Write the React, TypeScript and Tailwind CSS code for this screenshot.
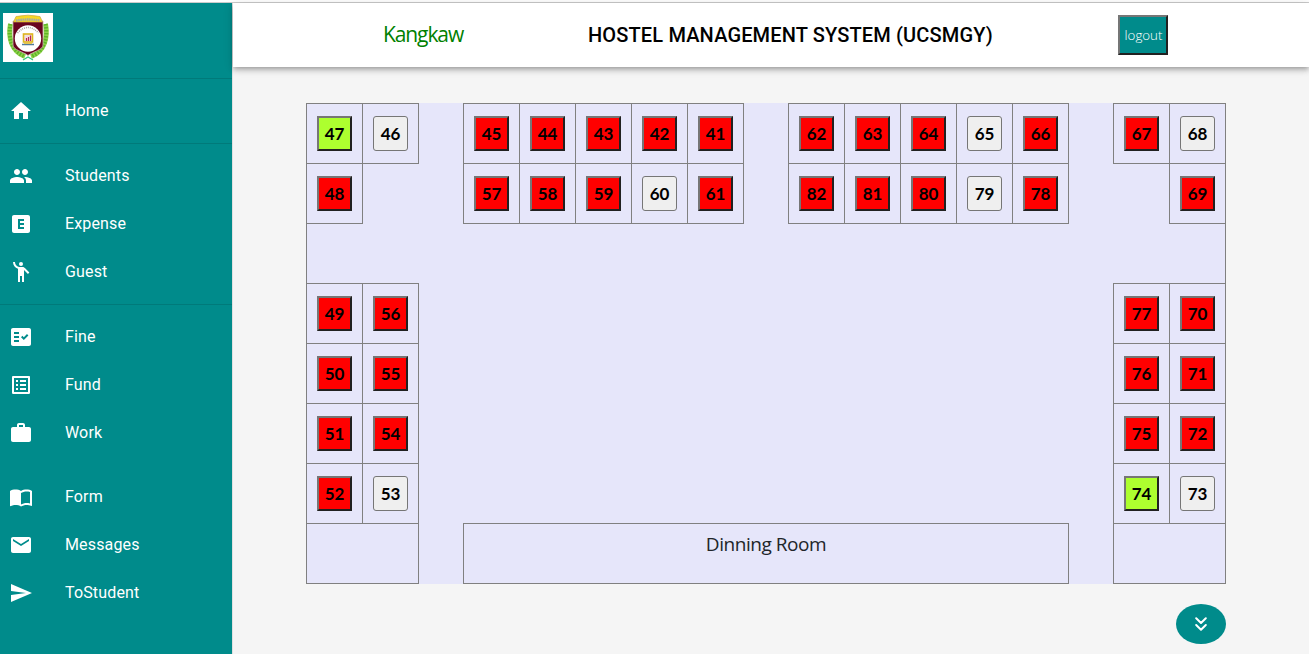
import React from "react";
import {
  MdHome, MdPeople, MdExplicit, MdEmojiPeople, MdFactCheck, MdListAlt,
  MdWork, MdImportContacts, MdEmail, MdSend,
} from "react-icons/md";
import type { IconType } from "react-icons";

type Item = { label: string; Icon: IconType };

const groups: { items: Item[]; divider: boolean }[] = [
  { items: [{ label: "Home", Icon: MdHome }], divider: true },
  {
    items: [
      { label: "Students", Icon: MdPeople },
      { label: "Expense", Icon: MdExplicit },
      { label: "Guest", Icon: MdEmojiPeople },
    ],
    divider: true,
  },
  {
    items: [
      { label: "Fine", Icon: MdFactCheck },
      { label: "Fund", Icon: MdListAlt },
      { label: "Work", Icon: MdWork },
    ],
    divider: false,
  },
  {
    items: [
      { label: "Form", Icon: MdImportContacts },
      { label: "Messages", Icon: MdEmail },
      { label: "ToStudent", Icon: MdSend },
    ],
    divider: false,
  },
];

const FREE = new Set([46, 60, 65, 79, 68, 53, 73]);
const PARTIAL = new Set([47, 74]);

function Room({ n }: { n: number }) {
  const base = "block mx-auto w-[35px] h-[35px] p-0 text-center font-['Lato',sans-serif] text-[17px] font-bold text-black ";
  if (FREE.has(n)) {
    return <button className={base + "rounded-[3px] border border-[#767676] bg-[#efefef]"}>{n}</button>;
  }
  const fill = PARTIAL.has(n) ? "bg-[#adff2f]" : "bg-[#ff0000]";
  return (
    <button className={base + fill + " border-2 border-t-[#767676] border-l-[#767676] border-r-[#212121] border-b-[#212121]"}>
      {n}
    </button>
  );
}

function Cells({ rooms }: { rooms: number[] }) {
  return (
    <>
      {rooms.map((n) => (
        <td key={n} className="border border-[#808080] p-0 align-middle"><Room n={n} /></td>
      ))}
    </>
  );
}

const columns = [56, 56, 45, 56, 56, 56, 56, 56, 45, 56, 56, 56, 56, 56, 45, 56, 56];
const sideRows = [
  [49, 56, 77, 70],
  [50, 55, 76, 71],
  [51, 54, 75, 72],
  [52, 53, 74, 73],
];

function Crest() {
  return (
    <svg viewBox="0 0 50 49" className="block h-[49px] w-[50px]">
      <rect width="50" height="49" fill="#fff" />
      <path d="M7.500 11C5 24 8 38 22 43.500M42.500 11C45 24 42 38 28 43.500" fill="none" stroke="#8fd24a" strokeWidth="5" />
      <path d="M7.500 11C5 24 8 38 22 43.500M42.500 11C45 24 42 38 28 43.500" fill="none" stroke="#5fb52a" strokeWidth="4" strokeDasharray="1.500 1.500" />
      <path d="M20 47L25 44L30 47" fill="none" stroke="#36c779" strokeWidth="1.2" />
      <path d="M10 8H40V32C40 37 30 38.500 25 42.500C20 38.500 10 37 10 32Z" fill="#69041f" stroke="#c9b3ad" strokeWidth=".8" />
      <path d="M10.500 9L13 3.500Q25 .8 37 3.500L39.500 9Z" fill="#f8d824" stroke="#c3a64d" strokeWidth=".7" />
      <path d="M13 7.500Q25 5.500 37 7.500" fill="none" stroke="#9fa7b2" strokeWidth="2.300" strokeDasharray="1.500 .7" />
      <circle cx="25" cy="25.500" r="13.200" fill="#fff" />
      <path d="M14.500 20Q25 9 35.500 20" fill="none" stroke="#aaa0a0" strokeWidth="1.500" strokeDasharray="1 1" />
      <rect x="20.500" y="21" width="9" height="8" fill="#f4dde0" stroke="#ddb51e" strokeWidth="1.600" />
      <path d="M23.500 28V25M25.500 28V24M27.500 28V22.500" stroke="#b72454" strokeWidth="1.200" />
      <path d="M19 31.500H31" stroke="#527b98" strokeWidth="1.500" />
      <path d="M21 30.300H29" stroke="#e6bd2d" />
    </svg>
  );
}

export default function App() {
  return (
    <div className="flex h-[654px] w-[1309px] flex-col overflow-hidden bg-white font-['Roboto',sans-serif]">
      <div className="h-[3px] shrink-0 border-b border-[#cccccc]" />
      <div className="flex min-h-0 flex-1">
        <aside className="w-[233px] shrink-0 border-r border-[#e0e0e0] bg-[#008b8b]">
          <div className="h-[76px] border-b border-[#007a7a] pt-[10px] pl-[3px]"><Crest /></div>
          <nav>
            {groups.map((g) => (
              <ul key={g.items[0].label} className={g.divider ? "border-b border-[#007a7a] py-2" : "py-2"}>
                {g.items.map(({ label, Icon }) => (
                  <li key={label} className="flex h-12 items-center pl-[9px] text-white">
                    <Icon className="h-6 w-6" />
                    <span className="ml-8 text-base leading-6 tracking-[0.15px]">{label}</span>
                  </li>
                ))}
              </ul>
            ))}
          </nav>
        </aside>
        <div className="flex flex-1 flex-col bg-[#f5f5f5]">
          <header className="flex h-16 shrink-0 items-center bg-white shadow-[0px_2px_4px_-1px_rgba(0,0,0,0.2),0px_4px_5px_0px_rgba(0,0,0,0.14),0px_1px_10px_0px_rgba(0,0,0,0.12)]">
            <span className="ml-[150px] w-[205px] pb-[2px] font-['Open_Sans',sans-serif] text-[21px] leading-[30px] tracking-[-1.1px] text-[#008000]">Kangkaw</span>
            <h1 className="w-[530px] whitespace-nowrap text-[20px] font-medium leading-8 tracking-[0.15px] text-black">
              HOSTEL MANAGEMENT SYSTEM (UCSMGY)
            </h1>
            <button className="h-10 w-[50px] whitespace-nowrap border-2 border-t-[#767676] border-l-[#767676] border-r-[#212121] border-b-[#212121] bg-[#008b8b] p-0 pt-[2px] pl-px font-['Open_Sans',sans-serif] text-[13.333px] font-light text-white">
              logout
            </button>
          </header>
          <main className="pt-9 pl-[73px]">
            <table className="w-[920px] table-fixed border-collapse bg-[#e6e6fa]">
              <colgroup>
                {columns.map((w, i) => (
                  <col key={i} className={w === 56 ? "w-[56px]" : "w-[45px]"} />
                ))}
              </colgroup>
              <tbody>
                <tr className="h-[60px]">
                  <Cells rooms={[47, 46]} />
                  <td />
                  <Cells rooms={[45, 44, 43, 42, 41]} />
                  <td />
                  <Cells rooms={[62, 63, 64, 65, 66]} />
                  <td />
                  <Cells rooms={[67, 68]} />
                </tr>
                <tr className="h-[60px]">
                  <Cells rooms={[48]} />
                  <td colSpan={2} />
                  <Cells rooms={[57, 58, 59, 60, 61]} />
                  <td />
                  <Cells rooms={[82, 81, 80, 79, 78]} />
                  <td colSpan={2} />
                  <Cells rooms={[69]} />
                </tr>
                <tr className="h-[60px]">
                  <td colSpan={17} className="border-x border-[#808080]" />
                </tr>
                {sideRows.map(([a, b, c, d]) => (
                  <tr key={a} className="h-[60px]">
                    <Cells rooms={[a, b]} />
                    <td colSpan={13} />
                    <Cells rooms={[c, d]} />
                  </tr>
                ))}
                <tr className="h-[60px]">
                  <td colSpan={2} className="border border-[#808080]" />
                  <td />
                  <td colSpan={11} className="border border-[#808080] p-0 pt-[7px] text-center align-top font-['Open_Sans',sans-serif] text-[19px] leading-[26px] tracking-[-0.45px] text-[#212529]">
                    Dinning Room
                  </td>
                  <td />
                  <td colSpan={2} className="border border-[#808080]" />
                </tr>
              </tbody>
            </table>
            <button className="mt-5 ml-[870px] flex h-10 w-[50px] items-center justify-center rounded-[50%] bg-[#008b8b]">
              <svg viewBox="0 0 12 14" className="h-[14px] w-3" fill="none" stroke="white" strokeWidth="2" strokeLinecap="round" strokeLinejoin="round">
                <path d="M1.200 1.300L6 6L10.800 1.300M1.200 8L6 12.700L10.800 8" />
              </svg>
            </button>
          </main>
        </div>
      </div>
    </div>
  );
}
